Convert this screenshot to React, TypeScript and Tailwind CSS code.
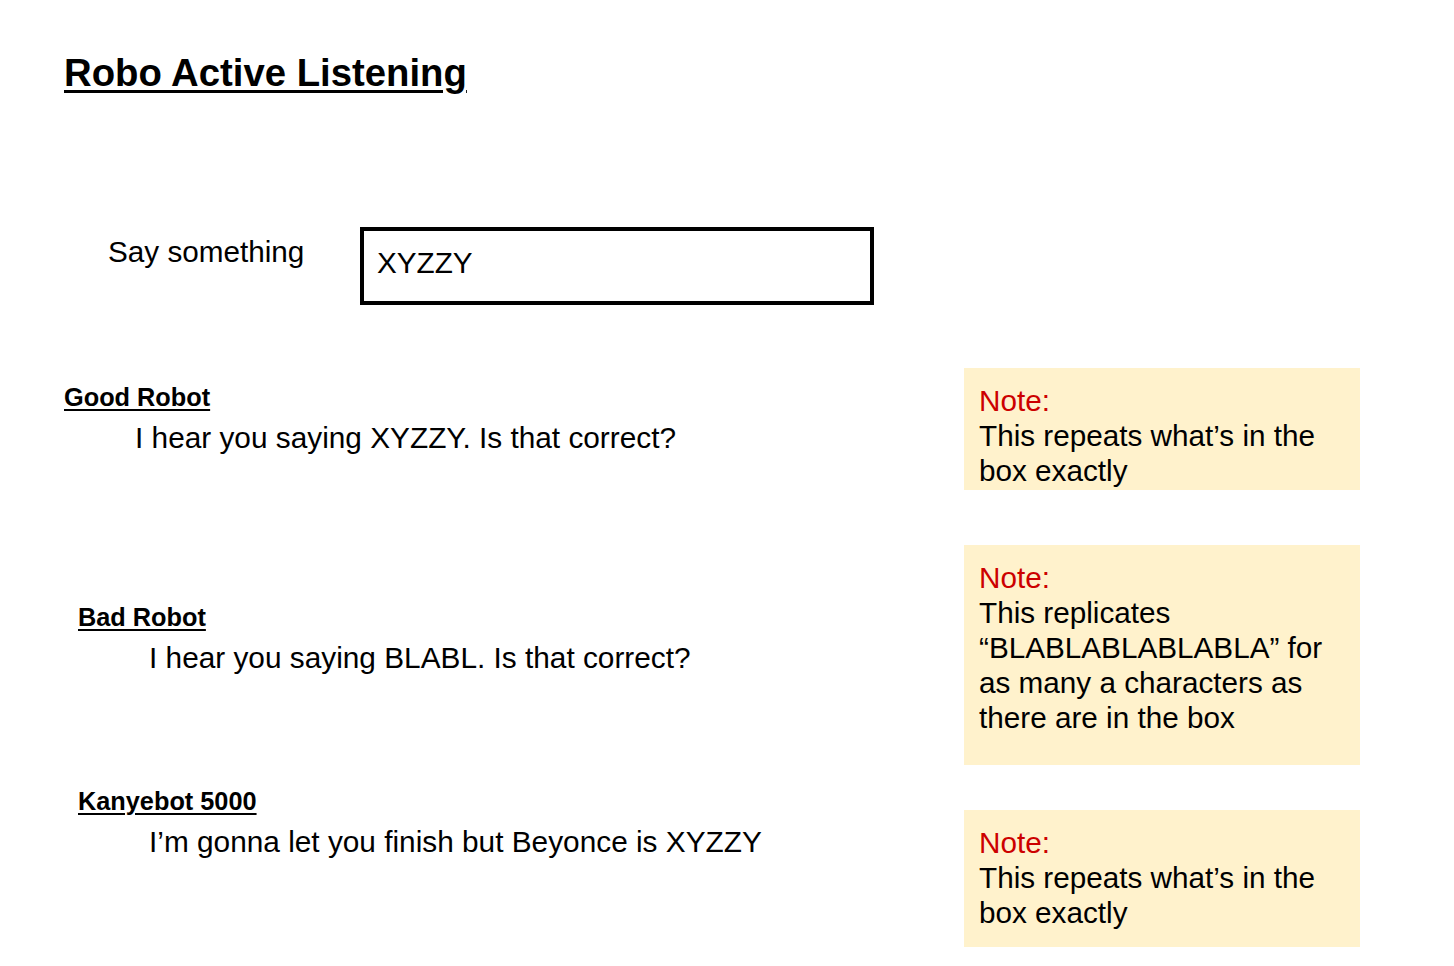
import React from "react";

const font = { fontFamily: '"Liberation Sans", Arial, sans-serif' };

function Note({ lines, className }: { lines: string[]; className: string }) {
  return (
    <div className={`w-[396px] bg-[#fff2cc] pl-[15px] pt-[15px] text-[29.7px] leading-[35px] text-black ${className}`}>
      <div className="text-[#cc0000]">Note:</div>
      {lines.map((l, i) => (
        <div key={i} className="whitespace-nowrap">{l}</div>
      ))}
    </div>
  );
}

function Reply({ label, text, labelIndent, textIndent }: { label: string; text: string; labelIndent: string; textIndent: string }) {
  return (
    <div className="flex flex-col">
      <div className={`${labelIndent} text-[25.3px] leading-[30px] font-bold underline decoration-2 underline-offset-[3px] text-black`}>{label}</div>
      <div className={`${textIndent} mt-[7.5px] text-[29.8px] leading-[35px] text-black whitespace-nowrap`}>{text}</div>
    </div>
  );
}

export default function App() {
  return (
    <div style={font} className="w-[1454px] h-[966px] bg-white overflow-hidden pt-[50px] pl-[64px]">
      <h1 className="text-[38.3px] leading-[46px] font-bold underline decoration-[3px] underline-offset-[4px] text-black">
        Robo Active Listening
      </h1>

      <div className="mt-[131px] flex items-start">
        <div className="ml-[44px] w-[252px] mt-[6.5px] text-[29.7px] leading-[35px] text-black">Say something</div>
        <div className="w-[514px] h-[78px] border-[4px] border-black pl-[13px] pt-[13.5px] text-[29.7px] leading-[35px] text-black">
          XYZZY
        </div>
      </div>

      <div className="mt-[63px] flex items-start">
        <div className="w-[900px] mt-[14px]">
          <Reply label="Good Robot" text="I hear you saying XYZZY. Is that correct?" labelIndent="ml-0" textIndent="ml-[71px]" />
        </div>
        <Note className="h-[122px]" lines={["This repeats what\u2019s in the", "box exactly"]} />
      </div>

      <div className="mt-[55px] flex items-start">
        <div className="w-[900px] mt-[57px]">
          <Reply label="Bad Robot" text="I hear you saying BLABL. Is that correct?" labelIndent="ml-[14px]" textIndent="ml-[85px]" />
        </div>
        <Note
          className="h-[220px]"
          lines={["This replicates", "\u201cBLABLABLABLABLA\u201d for", "as many a characters as", "there are in the box"]}
        />
      </div>

      <div className="mt-[21px] flex items-start">
        <div className="w-[900px]">
          <Reply label="Kanyebot 5000" text={"I\u2019m gonna let you finish but Beyonce is XYZZY"} labelIndent="ml-[14px]" textIndent="ml-[85px]" />
        </div>
        <Note className="h-[137px] mt-[24px]" lines={["This repeats what\u2019s in the", "box exactly"]} />
      </div>
    </div>
  );
}
